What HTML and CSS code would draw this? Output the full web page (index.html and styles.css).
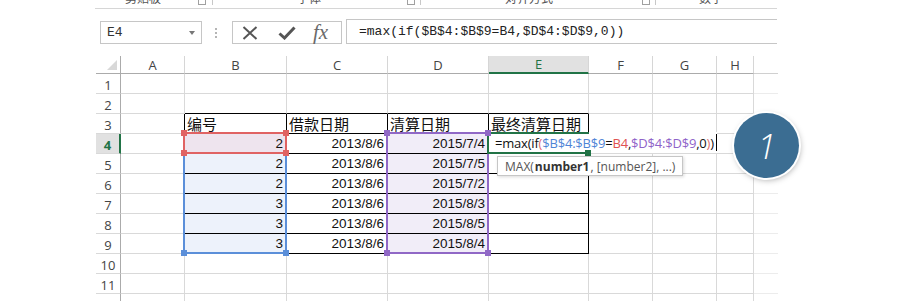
FILE: index.html
```html
<!DOCTYPE html>
<html>
<head>
<meta charset="utf-8">
<link rel="stylesheet" href="styles.css">
</head>
<body>
<div class="ribbon">
  <span class="grp g1">剪贴板</span><span class="launch l1"></span><span class="sep s1"></span>
  <span class="grp g2">字体</span><span class="launch l2"></span><span class="sep s2"></span>
  <span class="grp g3">对齐方式</span><span class="launch l3"></span><span class="sep s3"></span>
  <span class="grp g4">数字</span>
</div>

<div class="fbar">
  <div class="namebox"><span>E4</span><span class="nb-arrow"></span></div>
  <div class="dots"></div>
  <div class="btns">
    <svg class="ic-x" width="16" height="14" viewBox="0 0 16 14"><path d="M1.5 1 L14.5 13 M14.5 1 L1.5 13" stroke="#555" stroke-width="2" fill="none"/></svg>
    <svg class="ic-ok" width="18" height="14" viewBox="0 0 18 14"><path d="M1.5 7.5 L6.5 12 L16.5 1.5" stroke="#555" stroke-width="3" fill="none"/></svg>
    <span class="fx">fx</span>
  </div>
  <div class="formula">=max(if($B$4:$B$9=B4,$D$4:$D$9,0))</div>
</div>

<div class="sheet">
  <div class="corner"><i class="tri"></i></div>
  <div class="ch">A</div><div class="ch">B</div><div class="ch">C</div><div class="ch">D</div><div class="ch sel">E</div><div class="ch">F</div><div class="ch">G</div><div class="ch">H</div><div class="ch tail"></div>

  <div class="rh">1</div><div class="c"></div><div class="c"></div><div class="c"></div><div class="c"></div><div class="c"></div><div class="c"></div><div class="c"></div><div class="c"></div><div class="c tail"></div>

  <div class="rh">2</div><div class="c"></div><div class="c tt"></div><div class="c tt"></div><div class="c tt"></div><div class="c tt"></div><div class="c"></div><div class="c"></div><div class="c"></div><div class="c tail"></div>

  <div class="rh">3</div><div class="c tl"></div><div class="c t hd">编号</div><div class="c t hd">借款日期</div><div class="c t hd">清算日期</div><div class="c t hd">最终清算日期</div><div class="c"></div><div class="c"></div><div class="c"></div><div class="c tail"></div>

  <div class="rh sel">4</div><div class="c tl"></div><div class="c t num pink">2</div><div class="c t num">2013/8/6</div><div class="c t num lav">2015/7/4</div><div class="c t"></div><div class="c"></div><div class="c"></div><div class="c"></div><div class="c tail"></div>

  <div class="rh">5</div><div class="c tl"></div><div class="c t num blue">2</div><div class="c t num">2013/8/6</div><div class="c t num lav">2015/7/5</div><div class="c t"></div><div class="c"></div><div class="c"></div><div class="c"></div><div class="c tail"></div>

  <div class="rh">6</div><div class="c tl"></div><div class="c t num blue">2</div><div class="c t num">2013/8/6</div><div class="c t num lav">2015/7/2</div><div class="c t"></div><div class="c"></div><div class="c"></div><div class="c"></div><div class="c tail"></div>

  <div class="rh">7</div><div class="c tl"></div><div class="c t num blue">3</div><div class="c t num">2013/8/6</div><div class="c t num lav">2015/8/3</div><div class="c t"></div><div class="c"></div><div class="c"></div><div class="c"></div><div class="c tail"></div>

  <div class="rh">8</div><div class="c tl"></div><div class="c t num blue">3</div><div class="c t num">2013/8/6</div><div class="c t num lav">2015/8/5</div><div class="c t"></div><div class="c"></div><div class="c"></div><div class="c"></div><div class="c tail"></div>

  <div class="rh">9</div><div class="c tl"></div><div class="c t num blue">3</div><div class="c t num">2013/8/6</div><div class="c t num lav">2015/8/4</div><div class="c t"></div><div class="c"></div><div class="c"></div><div class="c"></div><div class="c tail"></div>

  <div class="rh">10</div><div class="c"></div><div class="c"></div><div class="c"></div><div class="c"></div><div class="c"></div><div class="c"></div><div class="c"></div><div class="c"></div><div class="c tail"></div>

  <div class="rh">11</div><div class="c"></div><div class="c"></div><div class="c"></div><div class="c"></div><div class="c"></div><div class="c"></div><div class="c"></div><div class="c"></div><div class="c tail"></div>

  <div class="rh">12</div><div class="c"></div><div class="c"></div><div class="c"></div><div class="c"></div><div class="c"></div><div class="c"></div><div class="c"></div><div class="c"></div><div class="c tail"></div>

  <div class="editor">=max(if<span class="p-red">(</span><span class="f-blue">$B$4:$B$9</span>=<span class="f-red">B4</span>,<span class="f-pur">$D$4:$D$9</span>,0<span class="p-red">)</span>)<span class="caret"></span></div>

  <div class="rng r-blue"></div>
  <div class="rng r-red"></div>
  <div class="rng r-pur"></div>
  <div class="rng r-green"></div>

  <div class="h hr h1"></div><div class="h hr h2"></div><div class="h hr h3"></div><div class="h hr h4"></div>
  <div class="h hb h5"></div><div class="h hb h6"></div>
  <div class="h hp h7"></div><div class="h hp h8"></div><div class="h hp h9"></div><div class="h hp h10"></div>
  <div class="h hg h11"></div>

  <div class="tip">MAX(<b>number1</b>, [number2], ...)</div>

  <div class="badge">1</div>
</div>
</body>
</html>
```

FILE: styles.css
```css
* { box-sizing: border-box; }
html, body {
  margin: 0;
  height: 301px;
  overflow: hidden;
  background: #fff;
}
body {
  width: 900px;
  font-family: "Open Sans", "Noto Sans CJK SC", sans-serif;
}

/* ribbon remnant */
.ribbon {
  margin-left: 95px;
  width: 682px;
  height: 9px;
  border-bottom: 1px solid #d6d6d6;
  display: flex;
  align-items: flex-end;
  overflow: hidden;
}
.grp {
  font-family: "Noto Sans CJK SC", sans-serif;
  font-size: 12px;
  line-height: 12px;
  color: #555;
  margin-bottom: 4px;
  white-space: nowrap;
}
.launch {
  width: 8px;
  height: 8px;
  border: 1px solid #a0a0a0;
  margin-bottom: 3px;
}
.sep {
  width: 1px;
  height: 8px;
  background: #c8c8c8;
  margin-bottom: 3px;
}
.g1 { margin-left: 30px; }
.l1 { margin-left: 37px; }
.s1 { margin-left: 6px; }
.g2 { margin-left: 84px; }
.l2 { margin-left: 86px; }
.s2 { margin-left: 5px; }
.g3 { margin-left: 84px; }
.l3 { margin-left: 89px; }
.s3 { margin-left: 5px; }
.g4 { margin-left: 43px; }

/* formula bar */
.fbar {
  margin-left: 100px;
  margin-top: 12px;
  width: 677px;
  height: 23px;
  display: flex;
  align-items: center;
}
.namebox {
  width: 102px;
  height: 23px;
  border: 1px solid #c6c6c6;
  display: flex;
  align-items: center;
  justify-content: space-between;
  padding: 0 6px 0 6px;
  font-family: "Liberation Mono", monospace;
  font-size: 13px;
  color: #333;
}
.nb-arrow {
  width: 0;
  height: 0;
  border-left: 3.5px solid transparent;
  border-right: 3.5px solid transparent;
  border-top: 4px solid #777;
}
.dots {
  margin-left: 13px;
  width: 2px;
  height: 10px;
  border-left: 2px dotted #b5b5b5;
}
.btns {
  margin-left: 15px;
  width: 110px;
  height: 23px;
  border: 1px solid #c6c6c6;
  display: flex;
  align-items: center;
  padding-left: 9px;
}
.ic-ok { margin-left: 20px; }
.fx {
  margin-left: 17px;
  font-family: "Liberation Serif", serif;
  font-style: italic;
  font-size: 21px;
  line-height: 21px;
  color: #6a6a6a;
}
.formula {
  align-self: flex-end;
  margin-left: 4px;
  flex: 1;
  height: 25px;
  border: 1px solid #c6c6c6;
  border-right: none;
  padding-left: 12px;
  display: flex;
  align-items: center;
  font-family: "Liberation Mono", monospace;
  font-size: 13px;
  color: #222;
  white-space: nowrap;
}

/* sheet grid */
.sheet {
  position: relative;
  margin-left: 96px;
  margin-top: 12px;
  width: 682px;
  display: grid;
  grid-template-columns: 25px 64px 102px 101px 101px 100px 64px 64px 37px 24px;
  grid-template-rows: 18px repeat(12, 20px);
}
.corner {
  border-right: 1px solid #ababab;
  border-bottom: 1px solid #ababab;
  display: flex;
  justify-content: flex-end;
  align-items: flex-end;
  padding: 0 3px 3px 0;
}
.tri {
  width: 0;
  height: 0;
  border-left: 10px solid transparent;
  border-bottom: 10px solid #d8d8d8;
}
.ch {
  border-right: 1px solid #d6d6d6;
  border-bottom: 1px solid #ababab;
  display: flex;
  align-items: center;
  justify-content: center;
  font-size: 13px;
  color: #444;
}
.ch.sel {
  background: #e1e1e1;
  border-bottom: 2px solid #217346;
  color: #217346;
}
.ch.tail {
  border-right: none;
  border-bottom-color: #d0d0d0;
}
.rh {
  border-right: 1px solid #ababab;
  border-bottom: 1px solid #d9d9d9;
  display: flex;
  align-items: center;
  justify-content: center;
  padding-top: 2px;
  font-size: 13px;
  color: #444;
}
.rh.sel {
  background: #e1e1e1;
  border-right: 2px solid #217346;
  color: #217346;
  font-weight: 700;
}
.c {
  border-right: 1px solid #d9d9d9;
  border-bottom: 1px solid #d9d9d9;
  display: flex;
  align-items: flex-end;
  padding: 0 3px 1px 3px;
  font-family: "Liberation Sans", sans-serif;
  font-size: 13.5px;
  line-height: 16px;
  color: #111;
  white-space: nowrap;
}
.c.tail {
  border-right: none;
  border-bottom-color: #ececec;
}
.num { justify-content: flex-end; }
.hd {
  font-family: "Noto Sans CJK SC", sans-serif;
  font-size: 15px;
  padding-left: 2px;
}
.t { border-right-color: #000; border-bottom-color: #000; }
.tt { border-bottom-color: #000; }
.tl { border-right-color: #000; }
.pink { background: #eee4ee; }
.blue { background: #edf2fb; }
.lav { background: #f1edf8; }

/* in-cell editor */
.editor {
  position: absolute;
  left: 391px;
  top: 76px;
  width: 230px;
  height: 21px;
  background: #fff;
  padding-left: 8px;
  display: flex;
  align-items: center;
  font-family: "Open Sans", sans-serif;
  font-size: 13px;
  letter-spacing: -0.2px;
  color: #111;
  white-space: nowrap;
}
.p-red { color: #e06b6b; }
.f-blue { color: #4f84d6; }
.f-red { color: #e05252; }
.f-pur { color: #8f63c9; }
.caret {
  display: inline-block;
  width: 1px;
  height: 17px;
  background: #000;
  margin-left: 2px;
}

/* range highlights */
.rng {
  position: absolute;
  border: 2px solid;
}
.r-blue { left: 87px; top: 76px; width: 104px; height: 122px; border-color: #5b8fd9; }
.r-red { left: 87px; top: 76px; width: 104px; height: 22px; border-color: #e06363; }
.r-pur { left: 290px; top: 76px; width: 103px; height: 122px; border-color: #9068c6; }
.r-green { left: 391px; top: 76px; width: 102px; height: 22px; border-color: #217346; border-right: none; }

.h { position: absolute; width: 6px; height: 6px; }
.hr { background: #e06363; }
.hb { background: #5b8fd9; }
.hp { background: #9068c6; }
.hg { background: #217346; }
.h1 { left: 85px; top: 74px; }
.h2 { left: 187px; top: 74px; }
.h3 { left: 85px; top: 94px; }
.h4 { left: 187px; top: 94px; }
.h5 { left: 85px; top: 194px; }
.h6 { left: 187px; top: 194px; }
.h7 { left: 288px; top: 74px; }
.h8 { left: 389px; top: 74px; }
.h9 { left: 288px; top: 194px; }
.h10 { left: 389px; top: 194px; }
.h11 { left: 489px; top: 94px; }

/* tooltip */
.tip {
  position: absolute;
  left: 401px;
  top: 100px;
  width: 186px;
  height: 20px;
  background: #fff;
  border: 1px solid #c6c6c6;
  box-shadow: 1px 1px 3px rgba(0, 0, 0, 0.15);
  padding-left: 7px;
  display: flex;
  align-items: center;
  font-family: "Open Sans", sans-serif;
  font-size: 12px;
  color: #555;
  white-space: nowrap;
}
.tip b { color: #333; font-weight: 700; margin: 0 1px; }

/* step badge */
.badge {
  position: absolute;
  left: 638px;
  top: 57px;
  width: 65px;
  height: 65px;
  border-radius: 50%;
  background: #3b6d92;
  box-shadow: 0 0 0 2px #fff, 1px 2px 6px rgba(0, 0, 0, 0.35);
  display: flex;
  align-items: center;
  justify-content: center;
  font-family: "Open Sans", sans-serif;
  font-style: italic;
  font-weight: 300;
  font-size: 34px;
  color: #fff;
}
```
